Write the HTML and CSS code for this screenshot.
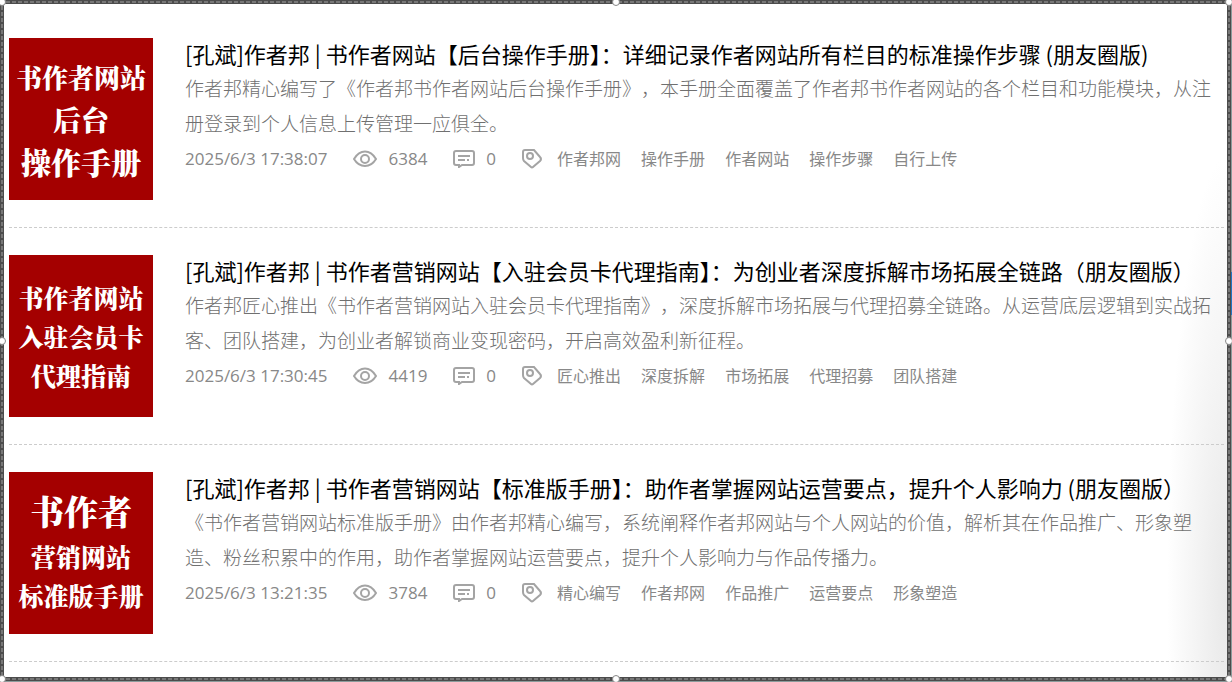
FILE: index.html
```
<!DOCTYPE html>
<html lang="zh-CN">
<head>
    <meta charset="UTF-8">
    <meta name="viewport" content="width=device-width, initial-scale=1.0">
    <title>作者邦</title>
    <link rel="stylesheet" href="styles.css">
</head>
<body>
    <svg width="0" height="0" class="icon-defs">
        <symbol id="icon-eye" viewBox="0 0 24 18">
            <path d="M1 9C4 4 7.500 1.500 12 1.500S20 4 23 9C20 14 16.500 16 12 16S4 14 1 9Z"/>
            <circle cx="12" cy="9" r="4"/>
        </symbol>
        <symbol id="icon-comment" viewBox="0 0 22 18">
            <path d="M3 1H19Q21 1 21 3V13Q21 15 19 15H9L6 17V15H3Q1 15 1 13V3Q1 1 3 1Z"/>
            <path d="M5 6H17M5 10H12M14 10H16"/>
        </symbol>
        <symbol id="icon-tag" viewBox="0 0 20 20">
            <path d="M1 3Q1 1 3 1L12 1L18 8Q20 10 18 12L11 18Q10 19 9 18L2 12Q1 11 1 9Z"/>
            <circle cx="8" cy="7" r="3"/>
        </symbol>
    </svg>

    <div class="frame">
        <span class="handle top left"></span>
        <span class="handle top center"></span>
        <span class="handle top right"></span>
        <span class="handle middle left"></span>
        <span class="handle middle right"></span>
        <span class="handle bottom left"></span>
        <span class="handle bottom center"></span>
        <span class="handle bottom right"></span>

        <main class="list">
            <article class="item">
                <a href="#" class="thumb">
                    <span class="md">书作者网站</span>
                    <span class="lg">后台</span>
                    <span class="xl">操作手册</span>
                </a>
                <div class="info">
                    <h2><a href="#">[孔斌]作者邦 | 书作者网站【后台操作手册】：详细记录作者网站所有栏目的标准操作步骤 (朋友圈版)</a></h2>
                    <p>作者邦精心编写了《作者邦书作者网站后台操作手册》，本手册全面覆盖了作者邦书作者网站的各个栏目和功能模块，从注册登录到个人信息上传管理一应俱全。</p>
                    <div class="meta">
                        <time>2025/6/3 17:38:07</time>
                        <span class="stat"><svg class="eye"><use href="#icon-eye"/></svg>6384</span>
                        <span class="stat"><svg class="comment"><use href="#icon-comment"/></svg>0</span>
                        <div class="tags">
                            <svg class="tag"><use href="#icon-tag"/></svg>
                            <a href="#">作者邦网</a>
                            <a href="#">操作手册</a>
                            <a href="#">作者网站</a>
                            <a href="#">操作步骤</a>
                            <a href="#">自行上传</a>
                        </div>
                    </div>
                </div>
            </article>

            <article class="item">
                <a href="#" class="thumb small">
                    <span>书作者网站</span>
                    <span>入驻会员卡</span>
                    <span>代理指南</span>
                </a>
                <div class="info">
                    <h2><a href="#">[孔斌]作者邦 | 书作者营销网站【入驻会员卡代理指南】：为创业者深度拆解市场拓展全链路（朋友圈版）</a></h2>
                    <p>作者邦匠心推出《书作者营销网站入驻会员卡代理指南》，深度拆解市场拓展与代理招募全链路。从运营底层逻辑到实战拓客、团队搭建，为创业者解锁商业变现密码，开启高效盈利新征程。</p>
                    <div class="meta">
                        <time>2025/6/3 17:30:45</time>
                        <span class="stat"><svg class="eye"><use href="#icon-eye"/></svg>4419</span>
                        <span class="stat"><svg class="comment"><use href="#icon-comment"/></svg>0</span>
                        <div class="tags">
                            <svg class="tag"><use href="#icon-tag"/></svg>
                            <a href="#">匠心推出</a>
                            <a href="#">深度拆解</a>
                            <a href="#">市场拓展</a>
                            <a href="#">代理招募</a>
                            <a href="#">团队搭建</a>
                        </div>
                    </div>
                </div>
            </article>

            <article class="item">
                <a href="#" class="thumb small with-head">
                    <span class="head">书作者</span>
                    <span>营销网站</span>
                    <span>标准版手册</span>
                </a>
                <div class="info">
                    <h2><a href="#">[孔斌]作者邦 | 书作者营销网站【标准版手册】：助作者掌握网站运营要点，提升个人影响力 (朋友圈版）</a></h2>
                    <p>《书作者营销网站标准版手册》由作者邦精心编写，系统阐释作者邦网站与个人网站的价值，解析其在作品推广、形象塑造、粉丝积累中的作用，助作者掌握网站运营要点，提升个人影响力与作品传播力。</p>
                    <div class="meta">
                        <time>2025/6/3 13:21:35</time>
                        <span class="stat"><svg class="eye"><use href="#icon-eye"/></svg>3784</span>
                        <span class="stat"><svg class="comment"><use href="#icon-comment"/></svg>0</span>
                        <div class="tags">
                            <svg class="tag"><use href="#icon-tag"/></svg>
                            <a href="#">精心编写</a>
                            <a href="#">作者邦网</a>
                            <a href="#">作品推广</a>
                            <a href="#">运营要点</a>
                            <a href="#">形象塑造</a>
                        </div>
                    </div>
                </div>
            </article>
        </main>
    </div>
</body>
</html>
```
FILE: styles.css
```
* {
    box-sizing: border-box;
}
body {
    margin: 0;
    padding: 0 1px 1px 0;
    background: linear-gradient(#8c9c9c 272px, #1f76c4 272px, #1f76c4 315px, #8c9c9c 315px);
    font-family: "Open Sans", "Noto Sans CJK SC", sans-serif;
    color: #888;
}
a {
    color: inherit;
    text-decoration: none;
}
.icon-defs {
    position: absolute;
}
.frame {
    position: relative;
    min-height: calc(100vh - 1px);
    padding: 4px;
    background:
        repeating-linear-gradient(90deg, #777 0 4px, transparent 4px 6px) 0 1px / 100% 2px no-repeat,
        repeating-linear-gradient(90deg, #777 0 4px, transparent 4px 6px) 0 calc(100% - 1px) / 100% 2px no-repeat,
        repeating-linear-gradient(#777 0 4px, transparent 4px 6px) 1px 0 / 2px 100% no-repeat,
        repeating-linear-gradient(#777 0 4px, transparent 4px 6px) calc(100% - 1px) 0 / 2px 100% no-repeat,
        #4c4c4c;
}
/* selection handles on the frame */
.handle {
    position: absolute;
    width: 8px;
    height: 8px;
    border: 1px solid #888;
    border-radius: 50%;
    background: #fff;
}
.handle.top { top: -2px; }
.handle.middle { top: calc(50% - 4px); }
.handle.bottom { bottom: -2px; }
.handle.left { left: -2px; }
.handle.center { left: calc(50% - 4px); }
.handle.right { right: -2px; }

.list {
    min-height: calc(100vh - 9px);
    padding: 7px 3px 0 5px;
    background: radial-gradient(60px 440px at 100% 88%, #e8e8e8, #fff) #fff;
}
.item {
    display: flex;
    gap: 32px;
    padding: 27px 0;
    border-bottom: 1px dashed #ccc;
}
.thumb {
    display: flex;
    flex-direction: column;
    justify-content: center;
    flex: none;
    width: 144px;
    height: 162px;
    background: #a40000;
    color: #fff;
    font-family: "Noto Serif CJK SC", "Noto Sans CJK SC", serif;
    font-weight: 900;
    line-height: 42px;
    text-align: center;
}
.thumb .md { font-size: 26px; }
.thumb .lg { font-size: 28px; }
.thumb .xl { font-size: 30px; }
.thumb.small {
    font-size: 25px;
    line-height: 39px;
}
.thumb.with-head {
    padding-bottom: 6px;
}
.thumb .head {
    font-size: 34px;
    line-height: 52px;
}
.info {
    flex: 1;
    min-width: 0;
}
h2 {
    margin: 0;
    padding-bottom: 4px;
    font-family: "Noto Sans CJK SC", sans-serif;
    font-size: 22px;
    font-weight: 400;
    line-height: 30px;
    color: #000;
}
p {
    margin: 0;
    font-size: 19px;
    font-weight: 300;
    line-height: 35px;
    color: #707070;
    text-spacing-trim: space-all;
}
.meta {
    display: flex;
    align-items: center;
    gap: 26px;
    font-size: 17px;
    line-height: 34px;
}
.stat {
    display: flex;
    align-items: center;
    gap: 11px;
}
.tags {
    display: flex;
    align-items: center;
    gap: 20px;
    font-size: 16px;
}
svg {
    fill: none;
    stroke: #a4a4a4;
    stroke-width: 2;
}
.eye {
    width: 24px;
    height: 18px;
}
.comment {
    width: 22px;
    height: 18px;
}
.tag {
    width: 20px;
    height: 20px;
    margin-right: -5px;
}
```
